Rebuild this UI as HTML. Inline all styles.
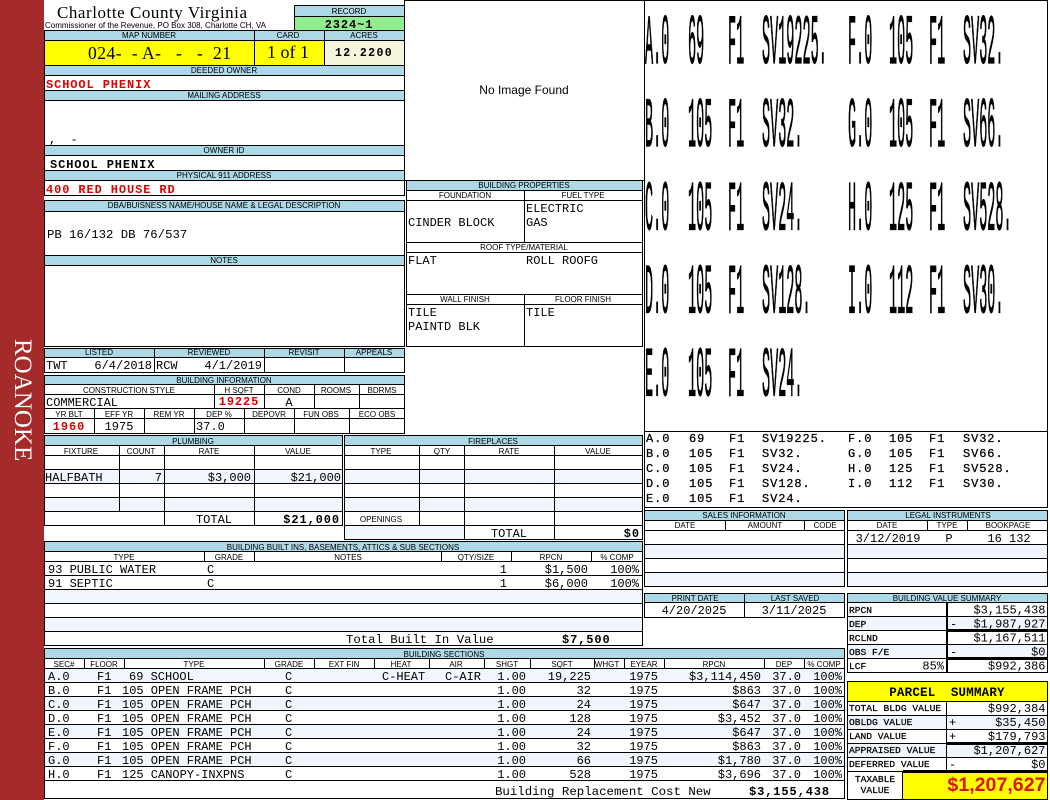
<!DOCTYPE html>
<html><head><meta charset="utf-8"><title>Property Card</title>
<style>
html,body{margin:0;padding:0;background:#fff;width:1050px;height:800px;overflow:hidden}
svg{display:block}
text{white-space:pre;fill:#000}
.h text{font:8px "Liberation Sans",sans-serif;text-anchor:middle}
.m text,text.m{font:12px "Liberation Mono",monospace}
.s text{font:12px "Liberation Mono",monospace;letter-spacing:.9px;stroke:#000;stroke-width:.25px}
.b{font:bold 12px "Liberation Mono",monospace !important;letter-spacing:.9px}
.l text{font:9.6px "Liberation Mono",monospace;stroke:#000;stroke-width:.25px}
.big text{font:13.5px "Liberation Mono",monospace;stroke:#000;stroke-width:.22px}
.r{text-anchor:end}
.c{text-anchor:middle}
text.red{fill:#e00000}
.ln{fill:none;stroke:#000;stroke-width:1;shape-rendering:crispEdges}
.hb{fill:#add8e6}
.alt{fill:#f1f5fc}
</style></head><body>
<svg width="1050" height="800" viewBox="0 0 1050 800" xmlns="http://www.w3.org/2000/svg">
<rect x="0" y="0" width="44" height="800" fill="#a52a2a"/>
<text transform="translate(15,339) rotate(90)" style="font:25px 'Liberation Serif',serif;fill:#fff">ROANOKE</text>

<!-- fills -->
<g shape-rendering="crispEdges">
<rect class="hb" x="294" y="5" width="111" height="11"/>
<rect x="294" y="16" width="111" height="14" fill="#90ee90"/>
<rect class="hb" x="44" y="30" width="361" height="10"/>
<rect x="44" y="40" width="280" height="25" fill="#ffff00"/>
<rect x="324" y="40" width="81" height="25" fill="#f5f5dc"/>
<rect class="hb" x="44" y="65" width="361" height="10"/>
<rect class="hb" x="44" y="90" width="361" height="10"/>
<rect class="hb" x="44" y="145" width="361" height="10"/>
<rect class="hb" x="44" y="170" width="361" height="10"/>
<rect class="hb" x="44" y="200" width="361" height="11"/>
<rect class="hb" x="44" y="255" width="361" height="10"/>
<rect class="hb" x="44" y="348" width="361" height="9"/>
<rect class="hb" x="44" y="375" width="361" height="9"/>
<rect class="hb" x="44" y="435" width="298" height="10"/>
<rect class="hb" x="344" y="435" width="298" height="10"/>
<rect class="hb" x="44" y="541" width="598" height="10"/>
<rect class="hb" x="44" y="648" width="801" height="10"/>
<rect class="hb" x="406" y="180" width="237" height="10"/>
<rect class="hb" x="644" y="510" width="201" height="10"/>
<rect class="hb" x="847" y="510" width="201" height="10"/>
<rect class="hb" x="644" y="593" width="201" height="10"/>
<rect class="hb" x="847" y="593" width="201" height="10"/>
<rect x="847" y="681" width="201" height="20" fill="#ffff00"/>
<rect x="903" y="771" width="145" height="28" fill="#ffff00"/>
<rect class="alt" x="44" y="469" width="298" height="14"/>
<rect class="alt" x="44" y="497" width="298" height="14"/>
<rect class="alt" x="344" y="469" width="298" height="14"/>
<rect class="alt" x="344" y="497" width="298" height="14"/>
<rect class="alt" x="344" y="525" width="120" height="14"/>
<rect class="alt" x="44" y="589" width="598" height="14"/>
<rect class="alt" x="44" y="617" width="598" height="14"/>
<rect class="alt" x="44" y="668" width="801" height="14"/>
<rect class="alt" x="44" y="696" width="801" height="14"/>
<rect class="alt" x="44" y="724" width="801" height="14"/>
<rect class="alt" x="44" y="752" width="801" height="14"/>
<rect class="alt" x="644" y="544" width="201" height="14"/>
<rect class="alt" x="644" y="572" width="201" height="14"/>
<rect class="alt" x="847" y="544" width="201" height="14"/>
<rect class="alt" x="847" y="572" width="201" height="14"/>
<rect class="alt" x="847" y="616" width="201" height="14"/>
<rect class="alt" x="847" y="644" width="201" height="14"/>
<rect class="alt" x="847" y="715" width="201" height="14"/>
<rect class="alt" x="847" y="743" width="201" height="14"/>
</g>

<!-- lines -->
<path class="ln" d="
M294.5 5.5H404.5M294.5 16.5H404.5M294.5 5.5V30
M404.5 0V196M44.5 30V196
M44 30.5H405M44 40.5H405M44 65.5H405M44 75.5H405M44 90.5H405M44 100.5H405M44 145.5H405M44 155.5H405M44 170.5H405M44 180.5H405M44 195.5H405
M254.5 30V65M324.5 30V65
M405 0.5H1048M644.5 0V510M1047.5 0V508M405 180.5H644
M44 200.5H405M44 211.5H405M44 255.5H405M44 265.5H405M44 346.5H405M44.5 200V346M404.5 200V346
M44 348.5H405M44 357.5H405M44 372.5H405M44.5 348V372M154.5 348V372M264.5 348V372M344.5 348V372M404.5 348V372
M44 375.5H405M44 384.5H405M44 394.5H405M44 408.5H405M44 418.5H405M44 433.5H405M44.5 375V433M404.5 375V433
M214.5 384V408M264.5 384V408M314.5 384V408M359.5 384V408
M94.5 408V433M144.5 408V433M194.5 408V433M244.5 408V433M294.5 408V433M349.5 408V433
M44 435.5H343M44 445.5H343M44 455.5H343M44 469.5H343M44 483.5H343M44 497.5H343M44 511.5H343M44 525.5H343
M44.5 435V525M342.5 435V525M119.5 445V511M164.5 445V525M254.5 445V525
M344 435.5H643M344 445.5H643M344 455.5H643M344 469.5H643M344 483.5H643M344 497.5H643M344 511.5H643M344 525.5H643M344 539.5H643
M344.5 435V539M642.5 435V539M419.5 445V525M464.5 445V539M554.5 445V539
M44 541.5H643M44 551.5H643M44 561.5H643M44 575.5H643M44 589.5H643M44 603.5H643M44 617.5H643M44 631.5H643M44 645.5H643
M44.5 541V645M642.5 541V645M204.5 551V561M254.5 551V561M441.5 551V561M511.5 551V561M591.5 551V561
M44 648.5H845M44 658.5H845M44 668.5H845M44 682.5H845M44 696.5H845M44 710.5H845M44 724.5H845M44 738.5H845M44 752.5H845M44 766.5H845M44 780.5H845M44 798.5H845
M44.5 648V798M844.5 648V798
M84.5 658V668M124.5 658V668M264.5 658V668M314.5 658V668M374.5 658V668M429.5 658V668M484.5 658V668M530.5 658V668M594.5 658V668M624.5 658V668M664.5 658V668M764.5 658V668M804.5 658V668
M406.5 180V346M642.5 180V346M406 190.5H643M406 200.5H643M406 242.5H643M406 252.5H643M406 294.5H643M406 304.5H643M406 346.5H643
M524.5 190V242M524.5 294V346
M644 431.5H1048M644 507.5H1048
M644 510.5H845M644 520.5H845M644 530.5H845M644 544.5H845M644 558.5H845M644 572.5H845M644 586.5H845M644.5 510V586M844.5 510V586M725.5 520V530M804.5 520V530
M847 510.5H1048M847 520.5H1048M847 530.5H1048M847 544.5H1048M847 558.5H1048M847 572.5H1048M847 586.5H1048M847.5 510V586M1047.5 510V586M927.5 520V530M967.5 520V530
M644 593.5H845M644 602.5H845M644 617.5H845M644.5 593V617M844.5 593V617M744.5 593V617
M847 593.5H1048M847 602.5H1048M847 616.5H1048M847 630.5H1048M847 644.5H1048M847 658.5H1048M847 672.5H1048M847.5 593V672M1047.5 593V672M946.5 602V672
M847 681.5H1048M847 701.5H1048M847 715.5H1048M847 729.5H1048M847 743.5H1048M847 757.5H1048M847 771.5H1048M847 799.5H1048M847.5 681V799M1047.5 681V799M946.5 701V771M902.5 771V799
"/>
<g shape-rendering="crispEdges">
<rect x="947" y="629" width="101" height="3"/>
<rect x="947" y="657" width="101" height="3"/>
<rect x="947" y="742" width="101" height="3"/>
<rect x="903" y="770" width="145" height="3"/>
<rect x="947" y="602" width="1" height="70"/>
</g>

<!-- titles -->
<text x="57" y="18" textLength="190" style="font:17px 'Liberation Serif',serif">Charlotte County Virginia</text>
<text x="45" y="28" textLength="221" style="font:8px 'Liberation Sans',sans-serif">Commissioner of the Revenue, PO Box 308, Charlotte CH, VA</text>

<!-- small headers -->
<g class="h">
<text x="349" y="14">RECORD</text>
<text x="149" y="38">MAP NUMBER</text><text x="288" y="38">CARD</text><text x="364" y="38">ACRES</text>
<text x="224" y="73">DEEDED OWNER</text>
<text x="224" y="98">MAILING ADDRESS</text>
<text x="224" y="153">OWNER ID</text>
<text x="224" y="178">PHYSICAL 911 ADDRESS</text>
<text x="224" y="208">DBA/BUISNESS NAME/HOUSE NAME &amp; LEGAL DESCRIPTION</text>
<text x="224" y="263">NOTES</text>
<text x="99" y="355">LISTED</text><text x="209" y="355">REVIEWED</text><text x="304" y="355">REVISIT</text><text x="374" y="355">APPEALS</text>
<text x="224" y="383">BUILDING INFORMATION</text>
<text x="129" y="393">CONSTRUCTION STYLE</text><text x="239" y="393">H SQFT</text><text x="289" y="393">COND</text><text x="336" y="393">ROOMS</text><text x="382" y="393">BDRMS</text>
<text x="69" y="417">YR BLT</text><text x="119" y="417">EFF YR</text><text x="169" y="417">REM YR</text><text x="219" y="417">DEP %</text><text x="269" y="417">DEPOVR</text><text x="321" y="417">FUN OBS</text><text x="377" y="417">ECO OBS</text>
<text x="193" y="444">PLUMBING</text>
<text x="81" y="454">FIXTURE</text><text x="141" y="454">COUNT</text><text x="209" y="454">RATE</text><text x="298" y="454">VALUE</text>
<text x="493" y="444">FIREPLACES</text>
<text x="381" y="454">TYPE</text><text x="442" y="454">QTY</text><text x="509" y="454">RATE</text><text x="598" y="454">VALUE</text>
<text x="381" y="522">OPENINGS</text>
<text x="343" y="550">BUILDING BUILT INS, BASEMENTS, ATTICS &amp; SUB SECTIONS</text>
<text x="124" y="560">TYPE</text><text x="229" y="560">GRADE</text><text x="348" y="560">NOTES</text><text x="476" y="560">QTY/SIZE</text><text x="551" y="560">RPCN</text><text x="617" y="560">% COMP</text>
<text x="444" y="657">BUILDING SECTIONS</text>
<text x="64" y="667">SEC#</text><text x="104" y="667">FLOOR</text><text x="194" y="667">TYPE</text><text x="289" y="667">GRADE</text><text x="344" y="667">EXT FIN</text><text x="401" y="667">HEAT</text><text x="456" y="667">AIR</text><text x="507" y="667">SHGT</text><text x="562" y="667">SQFT</text><text x="607" y="667">WHGT</text><text x="644" y="667">EYEAR</text><text x="714" y="667">RPCN</text><text x="784" y="667">DEP</text><text x="824" y="667">% COMP</text>
<text x="524" y="188">BUILDING PROPERTIES</text>
<text x="465" y="198">FOUNDATION</text><text x="583" y="198">FUEL TYPE</text>
<text x="524" y="250">ROOF TYPE/MATERIAL</text>
<text x="465" y="302">WALL FINISH</text><text x="583" y="302">FLOOR FINISH</text>
<text x="744" y="518">SALES INFORMATION</text>
<text x="685" y="528">DATE</text><text x="765" y="528">AMOUNT</text><text x="825" y="528">CODE</text>
<text x="948" y="518">LEGAL INSTRUMENTS</text>
<text x="887" y="528">DATE</text><text x="947" y="528">TYPE</text><text x="1008" y="528">BOOKPAGE</text>
<text x="695" y="601">PRINT DATE</text><text x="795" y="601">LAST SAVED</text>
<text x="947" y="601">BUILDING VALUE SUMMARY</text>
</g>

<!-- top values -->
<text class="c b" x="349" y="28">2324~1</text>
<text x="88" y="59" textLength="143" style="font:17.5px 'Liberation Serif',serif">024-  - A-   -   -  21</text>
<text class="c" x="288" y="58" style="font:18px 'Liberation Serif',serif">1 of 1</text>
<text class="c" x="364" y="56" style="font:bold 11.5px 'Liberation Mono',monospace;letter-spacing:1.4px">12.2200</text>
<text class="b red" x="46" y="88">SCHOOL PHENIX</text>
<text class="m" x="49" y="143">,  -</text>
<text class="b" x="50" y="168">SCHOOL PHENIX</text>
<text class="b red" x="46" y="193">400 RED HOUSE RD</text>

<g class="m">
<text x="47" y="238" style="font-size:12.3px">PB 16/132 DB 76/537</text>
<text x="46" y="369">TWT</text><text class="r" x="152" y="369">6/4/2018</text><text x="156" y="369">RCW</text><text class="r" x="262" y="369">4/1/2019</text>
<text x="46" y="406">COMMERCIAL</text><text class="c" x="289" y="406">A</text>
<text class="c" x="119" y="430">1975</text><text x="196" y="430">37.0</text>
<text x="45" y="481">HALFBATH</text><text class="r" x="162" y="481">7</text><text class="r" x="251" y="481">$3,000</text><text class="r" x="341" y="481">$21,000</text>
<text class="c" x="214" y="523">TOTAL</text>
<text class="c" x="509" y="537">TOTAL</text>
<text x="48" y="573">93 PUBLIC WATER</text><text x="207" y="573">C</text><text class="r" x="507" y="573">1</text><text class="r" x="588" y="573">$1,500</text><text class="r" x="639" y="573">100%</text>
<text x="48" y="587">91 SEPTIC</text><text x="207" y="587">C</text><text class="r" x="507" y="587">1</text><text class="r" x="588" y="587">$6,000</text><text class="r" x="639" y="587">100%</text>
<text x="346" y="643" style="font-size:12.3px">Total Built In Value</text>
<text x="408" y="226">CINDER BLOCK</text><text x="526" y="212">ELECTRIC</text><text x="526" y="226">GAS</text>
<text x="408" y="264">FLAT</text><text x="526" y="264">ROLL ROOFG</text>
<text x="408" y="316">TILE</text><text x="408" y="330">PAINTD BLK</text><text x="526" y="316">TILE</text>
<text class="c" x="888" y="542">3/12/2019</text><text class="c" x="949" y="542">P</text><text class="c" x="1009" y="542">16 132</text>
<text class="c" x="694" y="614">4/20/2025</text><text class="c" x="794" y="614">3/11/2025</text>
</g>
<text class="b red c" x="239" y="405">19225</text>
<text class="b red c" x="69" y="430">1960</text>
<text class="b r" x="340" y="523">$21,000</text>
<text class="b r" x="640" y="537">$0</text>
<text class="b" x="562" y="643">$7,500</text>

<!-- building sections -->
<g class="m">
<text x="48" y="680">A.0</text><text x="97" y="680">F1</text><text x="129" y="680">69 SCHOOL</text><text x="285" y="680">C</text><text x="382" y="680">C-HEAT</text><text x="445" y="680">C-AIR</text><text class="r" x="526" y="680">1.00</text><text class="r" x="591" y="680">19,225</text><text class="r" x="658" y="680">1975</text><text class="r" x="761" y="680">$3,114,450</text><text class="r" x="801" y="680">37.0</text><text class="r" x="842" y="680">100%</text>
<text x="48" y="694">B.0</text><text x="97" y="694">F1</text><text x="122" y="694">105 OPEN FRAME PCH</text><text x="285" y="694">C</text><text class="r" x="526" y="694">1.00</text><text class="r" x="591" y="694">32</text><text class="r" x="658" y="694">1975</text><text class="r" x="761" y="694">$863</text><text class="r" x="801" y="694">37.0</text><text class="r" x="842" y="694">100%</text>
<text x="48" y="708">C.0</text><text x="97" y="708">F1</text><text x="122" y="708">105 OPEN FRAME PCH</text><text x="285" y="708">C</text><text class="r" x="526" y="708">1.00</text><text class="r" x="591" y="708">24</text><text class="r" x="658" y="708">1975</text><text class="r" x="761" y="708">$647</text><text class="r" x="801" y="708">37.0</text><text class="r" x="842" y="708">100%</text>
<text x="48" y="722">D.0</text><text x="97" y="722">F1</text><text x="122" y="722">105 OPEN FRAME PCH</text><text x="285" y="722">C</text><text class="r" x="526" y="722">1.00</text><text class="r" x="591" y="722">128</text><text class="r" x="658" y="722">1975</text><text class="r" x="761" y="722">$3,452</text><text class="r" x="801" y="722">37.0</text><text class="r" x="842" y="722">100%</text>
<text x="48" y="736">E.0</text><text x="97" y="736">F1</text><text x="122" y="736">105 OPEN FRAME PCH</text><text x="285" y="736">C</text><text class="r" x="526" y="736">1.00</text><text class="r" x="591" y="736">24</text><text class="r" x="658" y="736">1975</text><text class="r" x="761" y="736">$647</text><text class="r" x="801" y="736">37.0</text><text class="r" x="842" y="736">100%</text>
<text x="48" y="750">F.0</text><text x="97" y="750">F1</text><text x="122" y="750">105 OPEN FRAME PCH</text><text x="285" y="750">C</text><text class="r" x="526" y="750">1.00</text><text class="r" x="591" y="750">32</text><text class="r" x="658" y="750">1975</text><text class="r" x="761" y="750">$863</text><text class="r" x="801" y="750">37.0</text><text class="r" x="842" y="750">100%</text>
<text x="48" y="764">G.0</text><text x="97" y="764">F1</text><text x="122" y="764">105 OPEN FRAME PCH</text><text x="285" y="764">C</text><text class="r" x="526" y="764">1.00</text><text class="r" x="591" y="764">66</text><text class="r" x="658" y="764">1975</text><text class="r" x="761" y="764">$1,780</text><text class="r" x="801" y="764">37.0</text><text class="r" x="842" y="764">100%</text>
<text x="48" y="778">H.0</text><text x="97" y="778">F1</text><text x="122" y="778">125 CANOPY-INXPNS</text><text x="285" y="778">C</text><text class="r" x="526" y="778">1.00</text><text class="r" x="591" y="778">528</text><text class="r" x="658" y="778">1975</text><text class="r" x="761" y="778">$3,696</text><text class="r" x="801" y="778">37.0</text><text class="r" x="842" y="778">100%</text>
<text x="495" y="795" style="font-size:12.4px">Building Replacement Cost New</text>
</g>
<text class="b" x="749" y="795">$3,155,438</text>

<!-- image placeholder -->
<text class="c" x="524" y="94" style="font:12px 'Liberation Sans',sans-serif">No Image Found</text>

<!-- sketch large -->
<g class="big" transform="scale(1,5.2)">
<text x="645" y="12.1">A.0</text><text x="688" y="12.1">69</text><text x="728" y="12.1">F1</text><text x="762" y="12.1">SV19225.</text><text x="848" y="12.1">F.0</text><text x="889" y="12.1">105</text><text x="929" y="12.1">F1</text><text x="963" y="12.1">SV32.</text>
<text x="645" y="28.1">B.0</text><text x="688" y="28.1">105</text><text x="728" y="28.1">F1</text><text x="762" y="28.1">SV32.</text><text x="848" y="28.1">G.0</text><text x="889" y="28.1">105</text><text x="929" y="28.1">F1</text><text x="963" y="28.1">SV66.</text>
<text x="645" y="44.1">C.0</text><text x="688" y="44.1">105</text><text x="728" y="44.1">F1</text><text x="762" y="44.1">SV24.</text><text x="848" y="44.1">H.0</text><text x="889" y="44.1">125</text><text x="929" y="44.1">F1</text><text x="963" y="44.1">SV528.</text>
<text x="645" y="60.1">D.0</text><text x="688" y="60.1">105</text><text x="728" y="60.1">F1</text><text x="762" y="60.1">SV128.</text><text x="848" y="60.1">I.0</text><text x="889" y="60.1">112</text><text x="929" y="60.1">F1</text><text x="963" y="60.1">SV30.</text>
<text x="645" y="76.1">E.0</text><text x="688" y="76.1">105</text><text x="728" y="76.1">F1</text><text x="762" y="76.1">SV24.</text>
</g>

<!-- sketch small -->
<g class="s">
<text x="646" y="442">A.0</text><text x="689" y="442">69</text><text x="729" y="442">F1</text><text x="762" y="442">SV19225.</text><text x="848" y="442">F.0</text><text x="889" y="442">105</text><text x="929" y="442">F1</text><text x="963" y="442">SV32.</text>
<text x="646" y="457">B.0</text><text x="689" y="457">105</text><text x="729" y="457">F1</text><text x="762" y="457">SV32.</text><text x="848" y="457">G.0</text><text x="889" y="457">105</text><text x="929" y="457">F1</text><text x="963" y="457">SV66.</text>
<text x="646" y="472">C.0</text><text x="689" y="472">105</text><text x="729" y="472">F1</text><text x="762" y="472">SV24.</text><text x="848" y="472">H.0</text><text x="889" y="472">125</text><text x="929" y="472">F1</text><text x="963" y="472">SV528.</text>
<text x="646" y="487">D.0</text><text x="689" y="487">105</text><text x="729" y="487">F1</text><text x="762" y="487">SV128.</text><text x="848" y="487">I.0</text><text x="889" y="487">112</text><text x="929" y="487">F1</text><text x="963" y="487">SV30.</text>
<text x="646" y="502">E.0</text><text x="689" y="502">105</text><text x="729" y="502">F1</text><text x="762" y="502">SV24.</text>
</g>

<!-- building value summary -->
<g class="l">
<text x="849" y="613">RPCN</text><text x="849" y="627">DEP</text><text x="849" y="641">RCLND</text><text x="849" y="655">OBS F/E</text><text x="849" y="669">LCF</text>
<text x="849" y="711">TOTAL BLDG VALUE</text><text x="849" y="725">OBLDG VALUE</text><text x="849" y="739">LAND VALUE</text><text x="849" y="753">APPRAISED VALUE</text><text x="849" y="767">DEFERRED VALUE</text>
<text class="c" x="875" y="782">TAXABLE</text><text class="c" x="875" y="793">VALUE</text>
</g>
<g class="m">
<text class="r" x="1045.5" y="613.5">$3,155,438</text>
<text x="950" y="627.5">-</text><text class="r" x="1045.5" y="627.5">$1,987,927</text>
<text class="r" x="1045.5" y="641.5">$1,167,511</text>
<text x="950" y="655.5">-</text><text class="r" x="1045.5" y="655.5">$0</text>
<text class="r" x="944" y="669.5">85%</text><text class="r" x="1045.5" y="669.5">$992,386</text>
<text class="r" x="1045.5" y="712">$992,384</text>
<text x="949" y="726">+</text><text class="r" x="1045.5" y="726">$35,450</text>
<text x="949" y="740">+</text><text class="r" x="1045.5" y="740">$179,793</text>
<text class="r" x="1045.5" y="754">$1,207,627</text>
<text x="949" y="768">-</text><text class="r" x="1045.5" y="768">$0</text>
</g>
<text class="c" x="947" y="696" style="font:bold 12.5px 'Liberation Mono',monospace;letter-spacing:.2px">PARCEL  SUMMARY</text>
<text class="r red" x="1045.5" y="791" style="font:bold 19.6px 'Liberation Sans',sans-serif;fill:#dc1414">$1,207,627</text>
</svg>
</body></html>
